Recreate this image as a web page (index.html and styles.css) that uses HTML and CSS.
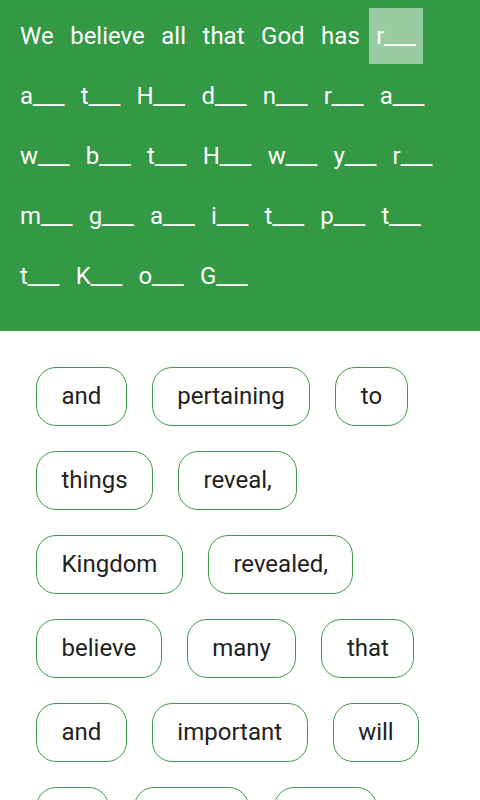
FILE: index.html
```html
<!DOCTYPE html>
<html>
<head>
<meta charset="utf-8">
<link rel="stylesheet" href="styles.css">
</head>
<body>
<div class="verse">
  <span class="w">We</span><span class="w">believe</span><span class="w">all</span><span class="w">that</span><span class="w">God</span><span class="w">has</span><span class="w b current">r___</span>
  <span class="w b">a___</span><span class="w b">t___</span><span class="w b">H___</span><span class="w b">d___</span><span class="w b">n___</span><span class="w b">r___</span><span class="w b">a___</span>
  <span class="w b">w___</span><span class="w b">b___</span><span class="w b">t___</span><span class="w b">H___</span><span class="w b">w___</span><span class="w b">y___</span><span class="w b">r___</span>
  <span class="w b">m___</span><span class="w b">g___</span><span class="w b">a___</span><span class="w b">i___</span><span class="w b">t___</span><span class="w b">p___</span><span class="w b">t___</span>
  <span class="w b">t___</span><span class="w b">K___</span><span class="w b">o___</span><span class="w b">G___</span>
</div>
<div class="bank">
  <span class="chip">and</span><span class="chip">pertaining</span><span class="chip">to</span>
  <span class="chip">things</span><span class="chip">reveal,</span>
  <span class="chip">Kingdom</span><span class="chip">revealed,</span>
  <span class="chip">believe</span><span class="chip">many</span><span class="chip">that</span>
  <span class="chip">and</span><span class="chip">important</span><span class="chip">will</span>
  <span class="chip">of</span><span class="chip">reveal</span><span class="chip">does</span>
</div>
</body>
</html>
```
FILE: styles.css
```css
html, body {
  margin: 0;
  padding: 0;
  background: #ffffff;
  font-family: Roboto, "Liberation Sans", sans-serif;
}
body {
  width: 480px;
  height: 800px;
  overflow: hidden;
}
.verse {
  background: #339944;
  padding: 6px 13px 25px 13px;
  display: flex;
  flex-wrap: wrap;
  column-gap: 2.5px;
  row-gap: 0;
  align-content: flex-start;
}
.w {
  display: block;
  height: 56px;
  line-height: 57px;
  padding: 0 7px;
  margin: 2px 0;
  color: #ffffff;
  font-size: 24px;
  white-space: nowrap;
}
.b {
  letter-spacing: -0.3px;
}
.current {
  background: rgba(255, 255, 255, 0.5);
}
.bank {
  padding: 36px 36px 0 36px;
  display: flex;
  flex-wrap: wrap;
  column-gap: 25px;
  row-gap: 25px;
}
.chip {
  box-sizing: border-box;
  height: 59px;
  line-height: 57px;
  padding: 0 24.5px;
  border: 1px solid #3d9b47;
  border-radius: 20px;
  color: #222222;
  font-size: 24px;
  white-space: nowrap;
}
```
